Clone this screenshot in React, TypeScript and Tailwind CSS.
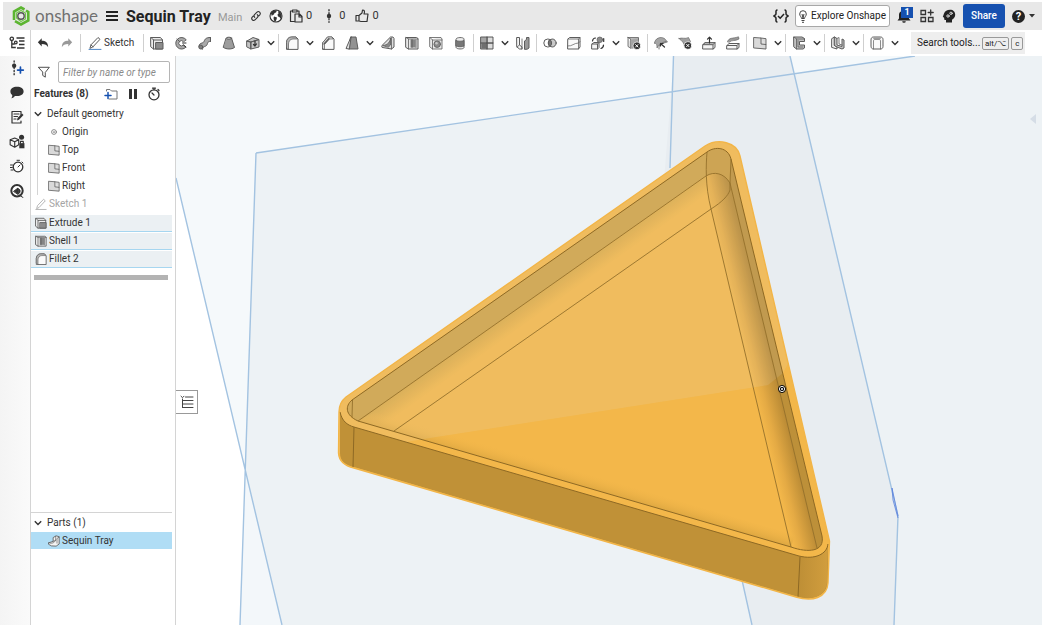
import React from "react";
import { clsx } from "clsx";

interface IconProps {
  children: React.ReactNode;
  className?: string;
}

function Icon({ children, className }: IconProps) {
  return (
    <svg
      viewBox="0 0 14 14"
      className={clsx("shrink-0", className || "w-3.5 h-3.5")}
      fill="none"
      stroke="#5c5c5c"
      strokeLinecap="round"
      strokeLinejoin="round"
      aria-hidden="true"
    >
      {children}
    </svg>
  );
}

const GREY = "#a9a9a9";
const PALE = "#dedede";

const icons: Record<string, React.ReactNode> = {
  undo: <path d="M1 6 5.500 1.500v2.800c4.500 0 7.500 2 7.500 7.700-1.500-2.900-3.500-3.700-7.500-3.700V11z" fill="#333" stroke="none" />,
  redo: <path d="M13 6 8.500 1.500v2.800C4 4.300 1 6.300 1 12c1.500-2.900 3.500-3.700 7.500-3.700V11z" fill="#999" stroke="none" />,
  sketch: (
    <>
      <path d="M2 12 3 8.800 10 1.500l2 1.800-7 7.500z" fill="#fff" />
      <path d="M3 9l2 1.700" />
      <path d="M1 13.400h12" stroke="#4d86c6" />
    </>
  ),
  extrude: (
    <>
      <path d="M1 1.500h9.500l2 2.500v9H3.500L1 11z" fill="#ececec" />
      <path d="M1 1.500 3.500 4h9M3.500 4v9" />
      <path d="M6 6.500h7V13H6z" fill="#8c8c8c" />
    </>
  ),
  revolve: (
    <>
      <path d="M12 3.500A5.800 5.800 0 1 0 12 11L9.300 9A2.600 2.600 0 1 1 9.300 5.500z" fill={GREY} />
      <path d="M8.500 7H12M9.500 9l2.500 2" stroke="#333" />
      <path d="M3 3l2.500 2.500" />
    </>
  ),
  sweep: (
    <>
      <path d="M1 10.500C1 6 5 8 6 5.500s2-4 6.500-4v4C9 5 10 8 8.500 9.500S5 10 4.500 13z" fill={GREY} />
      <ellipse cx="2.800" cy="11" rx="2" ry="2" fill="#808080" />
      <path d="M12.500 1.500v4" />
    </>
  ),
  loft: (
    <>
      <path d="M4.500 2h5l3 9.500c-3 2-8 2-11 0z" fill="#9c9c9c" />
      <ellipse cx="7" cy="2.200" rx="2.600" ry="1" fill={PALE} />
    </>
  ),
  thicken: (
    <>
      <path d="M1 5 5 6v7l-4-2zM5 6l8-2.500V11l-8 2zM1 5l6-3.500 6 2L5 6z" fill="#c4c4c4" />
      <path d="M9 5v5M7.500 8.500 9 10l1.500-2" stroke="#333" strokeWidth="1.200" />
    </>
  ),
  fillet: (
    <>
      <path d="M1.500 13V6.500c0-3 2-5.500 5-5.500H11l2 2v10z" fill="#fafafa" />
      <path d="M1.500 11V6.500c0-3 2-5.500 5-5.500H11l1.500 2H8C5 3 3.500 5.500 3.500 8v5z" fill="#b5b5b5" strokeWidth=".7" />
    </>
  ),
  chamfer: (
    <>
      <path d="M1.500 13V7l5-6H11l2 2v10z" fill="#fafafa" />
      <path d="M1.500 12V7l5-6H11l1 2H8.500L3.500 8.500V13z" fill={PALE} strokeWidth=".7" />
      <path d="M3 8l5-5.500" strokeWidth="1.300" />
    </>
  ),
  draft: (
    <>
      <path d="M6 1h5l2 12H4z" fill="#929292" />
      <path d="M6 1 1 12.500 4 13z" fill={PALE} />
    </>
  ),
  rib: (
    <>
      <path d="M1 9.500 9.500 1H12l1 1.500V11l-2.500 2-9-1.500z" fill={PALE} />
      <path d="M2 9.500C7 9 9 6 9.500 2v7l-2 2z" fill="#888" strokeWidth=".8" />
      <path d="M10.500 2v11" strokeWidth=".8" />
    </>
  ),
  shell: (
    <>
      <path d="M1 1.500h10.500l1.500 1V13H3.500L1 11.500z" fill="#e8e8e8" />
      <path d="M3.500 3v10M1 1.500 3.500 3H13M11 4v7.500" strokeWidth=".8" />
      <path d="M5.500 3.500h5.200v8H5.500z" fill="#858585" stroke="none" />
      <path d="M7 3.500v8" stroke="#555" strokeWidth=".8" />
    </>
  ),
  hole: (
    <>
      <path d="M1 1.500h11l1 1.500v10H3.500L1 11zM1 1.500 3.500 4H13M3.500 4v9" fill="#e9e9e9" strokeWidth=".8" />
      <circle cx="8.200" cy="8.200" r="3.300" fill="#8b8b8b" strokeWidth=".8" />
      <circle cx="7.500" cy="7.300" r="1.200" fill="#c8c8c8" stroke="none" />
    </>
  ),
  thread: (
    <>
      <path d="M3 3c0-2 8-2 8 0v8.500c0 2-8 2-8 0z" fill="#ececec" strokeWidth=".9" />
      <path d="M3 4.500c2 1 6 1 8 0v5.500c-2 1-6 1-8 0z" fill="#777" strokeWidth=".8" />
    </>
  ),
  pattern: (
    <>
      <path d="M1 1h12v12H1z" fill="#a5a5a5" />
      <path d="M1.500 7.500h5v5h-5z" fill="#707070" stroke="none" />
      <path d="M8 1.800h4.300v4.400H8zM8 8h4.300v4.300H8z" fill="#dcdcdc" stroke="none" />
      <path d="M7 1v12M1 7h12" stroke="#444" />
    </>
  ),
  mirror: (
    <>
      <path d="M1 1.500h2.500V9L6 11v2H3.500L1 11z" fill="#f4f4f4" />
      <path d="M8.500 13V5l2-1.500v-2H13V12l-1.500 1z" fill="#999" />
      <path d="M3.500 9 1 11M6 3v10" strokeWidth=".8" />
    </>
  ),
  boolean: (
    <>
      <circle cx="4.800" cy="7" r="4" fill="#fff" />
      <circle cx="9.200" cy="7" r="4" fill="#c9c9c9" />
      <path d="M7 3.700a4 4 0 0 1 0 6.600 4 4 0 0 1 0-6.600z" fill="#777" />
    </>
  ),
  split: (
    <>
      <path d="M1 3 2.500 1.500H13V11l-1.500 2H1z" fill="#fafafa" />
      <path d="M1 3h10.500v10M11.500 3 13 1.500" strokeWidth=".8" />
      <path d="M1 10c4 .5 6-3 10.500-3L13 5.500" strokeWidth=".7" />
    </>
  ),
  transform: (
    <>
      <path d="M1 8l2-1.500h5V11.500L6.500 13H1zM1 8h5.500v5M6.500 8 8 6.500" fill="#f5f5f5" />
      <circle cx="8.800" cy="3.800" r="2.800" fill="#8c8c8c" strokeWidth=".7" />
      <path d="M1.500 5c.3-2 1.500-3 3-3M12.500 9c0 2-1 3-2.500 3.500M12.700 2.500v3" stroke="#333" strokeWidth="1.200" />
    </>
  ),
  deletePart: (
    <>
      <path d="M1 1.500h10.500V6M1 1.500v9L3.500 12H6M3.500 3v9M1 1.500 3.500 3h8" fill="#e0e0e0" strokeWidth=".8" />
      <path d="M3.500 3.500H11V12H3.500z" fill="#a5a5a5" stroke="none" />
      <circle cx="9.800" cy="9.800" r="3.800" fill="#333" stroke="#fff" strokeWidth=".7" />
      <path d="M8.600 8.600 11 11M11 8.600 8.600 11" stroke="#fff" />
    </>
  ),
  modifyFillet: (
    <>
      <path d="M.5 7C1 2.500 6 0 10.500 2.500l3 3.500-3.500 1-2 1-3 1-2 3C3 9 3 7.500.5 7z" fill="#a5a5a5" strokeWidth=".6" />
      <path d="M5 13c-.5-4 2-6.500 7-7.500" stroke="#777" />
      <path d="M6.500 7.500l4 3.500M6.500 10V7.500H9" stroke="#333" strokeWidth="1.200" />
    </>
  ),
  deleteFace: (
    <>
      <path d="M1 2.500c3-1.500 6 1 9.500-1l2 4L6.500 11C6.500 7 4 5 1 2.500z" fill="#a0a0a0" strokeWidth=".6" />
      <circle cx="9.800" cy="9.500" r="3.800" fill="#333" stroke="#fff" strokeWidth=".7" />
      <path d="M8.600 8.300l2.400 2.400M11 8.300 8.600 10.700" stroke="#fff" />
    </>
  ),
  moveFace: (
    <>
      <path d="M1 8.500l2-2h10v5L11 13H1zM1 8.500h10V13M11 8.500l2-2" fill="#f5f5f5" />
      <path d="M1.500 8.500 3.500 6.500H13l-2 2z" fill="#b5b5b5" strokeWidth=".7" />
      <path d="M7.500 7V1.500M5.500 3.200l2-2 2 2" stroke="#333" strokeWidth="1.200" />
    </>
  ),
  replaceFace: (
    <>
      <path d="M1 9.500l2-2h10v4L11 13H1zM1 9.500h10V13M11 9.500l2-2" fill="#f5f5f5" />
      <path d="M1.500 5.500C3.500 1 6 3 12.500.800L13 3C9 5.500 6 3.500 3.500 6z" fill="#9a9a9a" strokeWidth=".6" />
    </>
  ),
  plane: (
    <>
      <path d="M1 1.500 13 3v10.500L1 12z" fill="#e1e1e1" stroke="none" />
      <path d="M1 1.500 8 2v6l5 .500v4.500L1 12zM8 2l5 .700V8.500" fill="#d9d9d9" strokeWidth=".9" />
    </>
  ),
  frame: (
    <>
      <path d="M2 1h8l2.500 1.500v3H7.500v3.500h5v3L11 13H4.500L2 11z" fill="#c2c2c2" />
      <path d="M2 1l2.500 2h8M4.500 3v10M6 4.500v6.500h5" strokeWidth=".8" />
    </>
  ),
  sheetMetal: (
    <>
      <path d="M1 2.500 3.500 1v8.500L6 11v2L1 11.500z" fill="#f0f0f0" />
      <path d="M3.500 1 6 2.500V9l5 1.500V3l2 1v8l-2 1-5-2-2.500-1.500z" fill="#c2c2c2" />
      <path d="M6 2.500 8 1.500v6.500L11 9" strokeWidth=".8" />
    </>
  ),
  custom: (
    <>
      <path d="M1 3.500C1 2 2 1 3.500 1h7C12 1 13 2 13 3.500v7c0 1.500-1 2.500-2.500 2.500h-7C2 13 1 12 1 10.500z" fill="#fafafa" />
      <path d="M3.500 13V5c0-1 .5-1.500 1.500-1.500h4c1 0 1.500.5 1.500 1.500v8" strokeWidth=".7" />
      <path d="M2.500 1.500h9L10 3.500H4z" fill="#9b9b9b" stroke="none" />
    </>
  ),
  part: (
    <>
      <path d="M1 9l5-1.500V3l3.500-2L13 2v8.500L9.500 13 4 12.700 1 11z" fill="#f4f4f4" />
      <path d="M6 7.500 9 6V1.500M1 9c3 1.500 6.500.500 8-3M13 2.500 10.500 4v5.500" strokeWidth=".8" />
    </>
  ),
};

interface Tool {
  icon: string;
  label: string;
  menu?: boolean;
}

const toolGroups: Tool[][] = [
  [
    { icon: "extrude", label: "Extrude" },
    { icon: "revolve", label: "Revolve" },
    { icon: "sweep", label: "Sweep" },
    { icon: "loft", label: "Loft" },
    { icon: "thicken", label: "Thicken", menu: true },
  ],
  [
    { icon: "fillet", label: "Fillet", menu: true },
    { icon: "chamfer", label: "Chamfer" },
    { icon: "draft", label: "Draft", menu: true },
    { icon: "rib", label: "Rib" },
    { icon: "shell", label: "Shell" },
    { icon: "hole", label: "Hole" },
    { icon: "thread", label: "External thread" },
  ],
  [
    { icon: "pattern", label: "Linear pattern", menu: true },
    { icon: "mirror", label: "Mirror" },
  ],
  [
    { icon: "boolean", label: "Boolean" },
    { icon: "split", label: "Split" },
    { icon: "transform", label: "Transform", menu: true },
    { icon: "deletePart", label: "Delete part" },
  ],
  [
    { icon: "modifyFillet", label: "Modify fillet" },
    { icon: "deleteFace", label: "Delete face" },
    { icon: "moveFace", label: "Move face" },
    { icon: "replaceFace", label: "Replace face" },
  ],
  [{ icon: "plane", label: "Plane", menu: true }],
  [{ icon: "frame", label: "Frame", menu: true }],
  [{ icon: "sheetMetal", label: "Sheet metal", menu: true }],
  [{ icon: "custom", label: "Custom features", menu: true }],
];

function Chevron({ className }: { className?: string }) {
  return (
    <svg viewBox="0 0 8 8" className={clsx("w-2 h-2 shrink-0", className)} fill="none" stroke="#333" strokeWidth="1.400" aria-hidden="true">
      <path d="M.8 2.300 4 5.500l3.200-3.200" />
    </svg>
  );
}

function Separator() {
  return <span className="w-px h-[18px] mx-px bg-[#cfcfcf] shrink-0" />;
}

function ToolButton({ icon, label, menu }: Tool) {
  return (
    <>
      <button aria-label={label} className="w-6 h-6 flex items-center justify-center shrink-0">
        <Icon>{icons[icon]}</Icon>
      </button>
      {menu && (
        <button aria-label={`${label} menu`} className="w-3 h-6 flex items-center justify-center shrink-0">
          <Chevron />
        </button>
      )}
    </>
  );
}

function Header() {
  return (
    <header className="h-7 ml-[3px] mt-0.5 bg-[#e8e8e8] flex items-center shrink-0 text-[#333]">
      <a href="#" className="flex items-center gap-1 ml-2 w-[95px]">
        <svg viewBox="0 0 20 20" className="w-5 h-5 shrink-0" fill="none" aria-hidden="true">
          <path d="M3 14V5.500L10 1.500l3.500 2" stroke="#5cb531" strokeWidth="2.600" />
          <path d="M15 4.500 17.300 6v8.500L10 18.500l-6-3.400" stroke="#5cb531" strokeWidth="2.600" />
          <path d="M5.500 12V7L10 4.500 14.500 7v6L10 15.500z" stroke="#74c84b" strokeWidth="1.200" />
          <circle cx="10" cy="10" r="3.200" fill="#e8e8e8" stroke="#555" strokeWidth="1.400" />
        </svg>
        <span className="font-['Lato'] text-[17px] leading-5 text-[#707070]">onshape</span>
      </a>
      <button aria-label="Menu" className="w-3 flex flex-col gap-0.5">
        <span className="h-0.5 bg-[#222]" />
        <span className="h-0.5 bg-[#222]" />
        <span className="h-0.5 bg-[#222]" />
      </button>
      <h1 className="ml-2 w-[92px] whitespace-nowrap text-base leading-4 pt-0.5 font-bold text-[#222]">Sequin Tray</h1>
      <span className="w-8 text-[11px] leading-4 pt-1 text-[#999]">Main</span>
      <button aria-label="Copy link" className="w-3">
        <Icon className="w-3 h-3">
          <path d="M5.500 8.500c-1-1-1-2.300 0-3.300l2.700-2.700c2-2 5 1 3.200 3.100L10 7M8.500 5.500c1 1 1 2.300 0 3.300L5.800 11.500c-2 2-5-1-3.200-3.100L4 7" stroke="#333" strokeWidth="1.300" />
        </Icon>
      </button>
      <button aria-label="Public document" className="ml-[7px] w-3.5">
        <Icon>
          <circle cx="7" cy="7" r="6" fill="#fff" stroke="#333" strokeWidth="1.100" />
          <path d="M1.800 4 4.500 1.500 8 1.300 7 3.500 5.500 4 5 5.500l-1.500.5L3 7.500zM5 7.500l3 1-.5 2-1 2.200L5 11.500 4.500 9zM9 2l2.500 1.500L12.700 7l-1.200 3-1-2-1.500-.5-.5-2 1-1z" fill="#333" stroke="none" />
        </Icon>
      </button>
      <button className="ml-1.5 flex items-center gap-[3px] text-[11px] leading-4">
        <Icon>
          <path d="M5 12.500H1.500V2h2M8 2h2v2M3.500 1h4.500v2H3.500zM6 5h4.500L13 7.500V13H6zM10 5v3h3" stroke="#333" strokeWidth="1.200" />
        </Icon>
        0
      </button>
      <button className="ml-2.5 flex items-center gap-[3px] text-[11px] leading-4">
        <Icon>
          <path d="M7 .8v12.500" stroke="#333" strokeWidth="1.400" strokeDasharray="1 2" />
          <circle cx="7" cy="7" r="2.200" fill="#333" stroke="none" />
        </Icon>
        0
      </button>
      <button className="ml-2.5 flex items-center gap-[3px] text-[11px] leading-4">
        <Icon>
          <path d="M1 6.500h3V12H1zM4 6.500 7 4l.5-3c2 0 2.500 1.500 1.500 4h4L12 12.500H6L4 12" stroke="#333" strokeWidth="1.200" />
        </Icon>
        0
      </button>

      <div className="ml-auto flex items-center h-full">
        <button aria-label="Feature script" className="w-4 mr-1.5">
          <svg viewBox="0 0 16 14" className="w-4 h-3.5" fill="none" stroke="#222" strokeWidth="1.500" aria-hidden="true">
            <path d="M4.500 1C2 1 3.500 4 2.800 5.500L1 7l1.800 1.500C3.500 10 2 13 4.500 13M11.500 1c2.500 0 1 3 1.700 4.500L15 7l-1.800 1.500C12.500 10 14 13 11.500 13M5 7l2.200 2.200L11 5" />
          </svg>
        </button>
        <button className="h-[22px] w-[95px] rounded-[3px] border border-[#a8a8a8] bg-white flex items-center justify-center gap-1 text-[10px] leading-4 whitespace-nowrap text-[#222]">
          <svg viewBox="0 0 8 13" className="w-2 h-[13px] shrink-0" fill="none" stroke="#444" aria-hidden="true">
            <path d="M2.500 8.500C2.500 7 .7 6 .7 4a3.300 3.300 0 0 1 6.600 0c0 2-1.800 3-1.800 4.500zM2.500 10.500h3M3 12.300h2M3 4l1 4 1-4" />
          </svg>
          Explore Onshape
        </button>
        <button aria-label="Notifications" className="relative ml-[7px] w-3.5">
          <Icon>
            <path d="M.5 11.500 2 9.500V6C2 3 4.500 1.500 7 1.500S12 3 12 6v3.500l1.500 2zM5.200 12.200h3.600a1.800 1.500 0 0 1-3.600 0" fill="#222" stroke="none" />
          </Icon>
          <span className="absolute -top-0.5 left-1 w-3 h-[11px] bg-[#1651b0] text-white text-[9px] leading-[11px] font-bold text-center">1</span>
        </button>
        <button aria-label="Apps" className="ml-[9px] w-3.5">
          <Icon>
            <path d="M1 1.500h4.500v4H1zM1 8.500h4.500v4H1zM8.500 8.500H13v4H8.500zM10.700 1v5M8.200 3.500h5" stroke="#333" strokeWidth="1.300" strokeLinejoin="miter" />
          </Icon>
        </button>
        <button aria-label="Learning center" className="ml-2 w-3.5">
          <Icon>
            <path d="M4 13.500V11H2.500L2 8.500.8 8 2 4.500C3 2 5 .8 8 .8c3.200 0 5.200 2 5.200 5 0 2.200-1.200 3.500-3.200 5v2.700z" fill="#222" stroke="none" />
            <circle cx="6" cy="7" r="1.200" stroke="#e8e8e8" strokeWidth=".9" />
            <circle cx="9" cy="4.300" r="1.200" stroke="#e8e8e8" strokeWidth=".9" />
          </Icon>
        </button>
        <button className="ml-[7px] h-6 w-[42px] rounded-[3px] bg-[#1651b0] text-white text-[10px] leading-4 font-medium">Share</button>
        <button aria-label="Help" className="ml-[7px] mr-[7px] flex items-center gap-1">
          <span className="w-[13px] h-[13px] rounded-full bg-[#222] text-white text-[11px] leading-[13px] font-bold">?</span>
          <svg viewBox="0 0 6 4" className="w-1.5 h-1" aria-hidden="true">
            <path d="M0 0h6L3 3.500z" fill="#333" />
          </svg>
        </button>
      </div>
    </header>
  );
}

function Toolbar() {
  return (
    <div role="toolbar" className="h-[26px] pl-[3px] flex items-center bg-white shrink-0">
      <button aria-label="Feature list" className="w-7 h-full border-r border-[#d4d4d4] flex items-center justify-center shrink-0">
        <svg viewBox="0 0 16 14" className="w-4 h-3.5" fill="none" stroke="#333" strokeWidth="1.300" aria-hidden="true">
          <circle cx="2.800" cy="2.800" r="1.700" />
          <circle cx="6.800" cy="6.500" r="1.300" />
          <path d="M2.800 4.500v7h4M2.800 8h3M7.500 2h8M10 5h5.500M10 8.500h5.500M8 12h7.500" />
        </svg>
      </button>
      <button aria-label="Undo" className="w-6 h-6 flex items-center justify-center shrink-0">
        <Icon className="w-3 h-3">{icons.undo}</Icon>
      </button>
      <button aria-label="Redo" className="w-6 h-6 flex items-center justify-center shrink-0">
        <Icon className="w-3 h-3">{icons.redo}</Icon>
      </button>
      <Separator />
      <button className="w-[60px] h-6 pl-1.5 flex items-center gap-0.5 text-[10px] leading-4 text-[#333] shrink-0">
        <Icon>{icons.sketch}</Icon>
        Sketch
      </button>
      {toolGroups.map((group) => (
        <React.Fragment key={group[0].icon}>
          <Separator />
          {group.map((tool) => (
            <ToolButton key={tool.icon} {...tool} />
          ))}
        </React.Fragment>
      ))}
      <button className="ml-2.5 h-[22px] w-[114px] bg-[#eeeeee] flex items-center px-1.5 gap-0.5 text-[10px] leading-4 whitespace-nowrap text-[#222] shrink-0">
        <span className="w-[63px] text-left">Search tools...</span>
        <kbd className="h-[13px] px-0.5 border border-[#999] rounded-xs font-[inherit] text-[8px] leading-[11px]">alt/⌥</kbd>
        <kbd className="h-[13px] px-[3px] border border-[#999] rounded-xs font-[inherit] text-[8px] leading-[11px]">c</kbd>
      </button>
    </div>
  );
}

function Rail() {
  return (
    <nav className="w-[30px] pl-[3px] shrink-0 bg-linear-to-r from-[#f4f4f4] to-[#fafafa]">
      <div className="h-[147px] flex flex-col justify-between">
        <button aria-label="Versions" className="h-6 flex items-center justify-center">
          <Icon className="w-4 h-4">
            <path d="M4.500.8v12" stroke="#333" strokeWidth="1.200" strokeDasharray="1 1.800" />
            <circle cx="4.500" cy="5" r="1.900" fill="#333" stroke="none" />
            <path d="M7.500 8.800h5M10 6.300v5" stroke="#1651b0" strokeWidth="1.500" />
          </Icon>
        </button>
        <button aria-label="Comments" className="h-6 flex items-center justify-center">
          <Icon>
            <path d="M7 .8c4 0 6.600 2 6.600 4.700S11 10.100 7 10.100c-.8 0-1.500 0-2.200-.2C4 11.300 3 12 1.200 12.300c1-1 1.200-2 1-3.200C1 8.100.4 7 .4 5.500.4 2.800 3 .8 7 .8z" fill="#333" stroke="none" />
          </Icon>
        </button>
        <button aria-label="Notes" className="h-6 flex items-center justify-center">
          <Icon>
            <path d="M11 5V1.500H2v11.500h9v-2M4 4h5M4 6.500h3.500M4 9h2" stroke="#333" strokeWidth="1.200" />
            <path d="M7 10.500 7.500 8 12 3.500l1.500 1.500L9 9.800z" fill="#333" stroke="none" />
          </Icon>
        </button>
        <button aria-label="Part references" className="h-6 flex items-center justify-center">
          <Icon className="w-4 h-4">
            <path d="M1 5l4-1.500L8.500 5v4.500L5 11.500 1 9.500zM1 5l4 1.800L8.500 5M5 6.800v4.500" stroke="#333" />
            <circle cx="11" cy="2.800" r="2.200" fill="#333" stroke="none" />
            <path d="M9 8h4.500v4.500H9z" fill="#333" stroke="none" />
            <path d="M10 8V6.500h2.500V8" stroke="#333" />
          </Icon>
        </button>
        <button aria-label="Performance" className="h-6 flex items-center justify-center">
          <Icon>
            <circle cx="8" cy="8" r="4.800" fill="#fff" stroke="#333" strokeWidth="1.300" />
            <path d="M7 1.300h2.500M12 3l1 1M8 8l2-2M.5 6h2M.3 8.500h2M1 11h2" stroke="#333" />
          </Icon>
        </button>
        <button aria-label="Search" className="h-6 flex items-center justify-center">
          <Icon>
            <circle cx="7" cy="6.800" r="5.700" fill="#fff" stroke="#333" strokeWidth="2" />
            <path d="M3.800 7.200 8 4v6zM8.500 5l1.500 1v2.500L8.500 9.500zM9 11l4 2.500" fill="#333" stroke="#333" />
          </Icon>
        </button>
      </div>
    </nav>
  );
}

function FeatureRow({ icon, label }: { icon: string; label: string }) {
  return (
    <li className="h-[17px] mr-[3px] pl-1 flex items-center gap-0.5 bg-[#ebf0f3] border-b border-[#a6d6f0]">
      <Icon className="w-3 h-3">{icons[icon]}</Icon>
      {label}
    </li>
  );
}

function FeaturePanel() {
  return (
    <aside className="w-[146px] shrink-0 border-x border-[#d4d4d4] bg-white flex flex-col text-[10px] leading-4 text-[#333]">
      <div className="pt-[5px] pl-[7px] pr-[5px] flex items-center gap-2">
        <Icon className="w-3 h-3">
          <path d="M.8 1.500h12.400L8.500 7.500v5.500L5.500 11V7.500z" stroke="#444" strokeWidth="1.100" />
        </Icon>
        <input
          aria-label="Filter features"
          placeholder="Filter by name or type"
          className="w-full min-w-0 h-[22px] px-1 rounded-xs border border-[#b5b5b5] text-[10px] italic placeholder:text-[#8a8a8a]"
        />
      </div>
      <div className="h-[21px] pl-[3px] flex items-center">
        <h2 className="w-[70px] font-bold">Features (8)</h2>
        <button aria-label="Add folder" className="w-3.5">
          <Icon>
            <path d="M2.500 4V2.500h3.500L7.500 4H13v8H5" stroke="#777" />
            <path d="M1 8.500h6M4 5.500v6" stroke="#1651b0" strokeWidth="1.500" />
          </Icon>
        </button>
        <button aria-label="Pause" className="ml-2 w-3.5 flex justify-center gap-0.5">
          <span className="w-[3px] h-2.5 bg-[#333]" />
          <span className="w-[3px] h-2.5 bg-[#333]" />
        </button>
        <button aria-label="Regeneration times" className="ml-[7px] w-3.5">
          <Icon>
            <circle cx="7" cy="7.800" r="5" stroke="#333" strokeWidth="1.300" />
            <path d="M5.500 1.200h3M7 1.200v1.500M7 8 5 6M11 2.500l1 1" stroke="#333" strokeWidth="1.200" />
          </Icon>
        </button>
      </div>

      <button className="mt-px h-[18px] pl-[3px] flex items-center gap-[5px] text-left">
        <Chevron />
        Default geometry
      </button>
      <ul className="ml-1.5 border-l border-[#d4d4d4]">
        <li className="h-[18px] pl-2.5 flex items-center gap-0.5">
          <Icon className="w-3 h-3">
            <circle cx="7" cy="7" r="2.800" stroke="#777" />
            <circle cx="7" cy="7" r="1" fill="#777" stroke="none" />
          </Icon>
          Origin
        </li>
        {["Top", "Front", "Right"].map((name) => (
          <li key={name} className="h-[18px] pl-2.5 flex items-center gap-0.5">
            <Icon className="w-3 h-3">{icons.plane}</Icon>
            {name}
          </li>
        ))}
      </ul>
      <div className="h-[18px] pl-1 flex items-center gap-0.5 text-[#a5a5a5]">
        <Icon className="w-3 h-3 opacity-50">
          <path d="M2 12 3 8.800 10 1.500l2 1.800-7 7.500zM1 13.400h12" />
        </Icon>
        Sketch 1
      </div>
      <ul className="mt-0.5 flex flex-col gap-px">
        <FeatureRow icon="extrude" label="Extrude 1" />
        <FeatureRow icon="shell" label="Shell 1" />
        <FeatureRow icon="fillet" label="Fillet 2" />
      </ul>
      <div className="mt-[7px] ml-[3px] mr-[7px] h-[5px] bg-[#b3b3b3]" />

      <section className="mt-auto mb-[76px] mr-[3px] border-t border-[#d4d4d4]">
        <button className="h-[19px] pl-[3px] flex items-center gap-[5px]">
          <Chevron />
          Parts (1)
        </button>
        <div className="h-[17px] pl-[17px] flex items-center gap-0.5 bg-[#b0ddf5]">
          <Icon className="w-3 h-3">{icons.part}</Icon>
          Sequin Tray
        </div>
      </section>
    </aside>
  );
}

const OUTLINE =
  "M705 146 346 397C341 401 339 406 339 412L338.500 453C339 461 345 466 354 468L796 597C812 602 827 598 828 583L829.500 541 740 156C737 142 718 138 705 146Z";
const INNER =
  "M707 152 352 400C345 406 345 415 358 421L791 547C808 553 825 552 822 536L731 159C728 147 715 146 707 152Z";

function TrayModel() {
  return (
    <svg viewBox="176 56 866 569" preserveAspectRatio="xMidYMid slice" className="w-full h-full" fill="none" role="img" aria-label="Sequin Tray model">
      <defs>
        <linearGradient id="leftFillet" gradientUnits="userSpaceOnUse" x1="500" y1="321" x2="510" y2="335">
          <stop offset="0" stopColor="#dba946" />
          <stop offset="1" stopColor="#f3b74a" />
        </linearGradient>
        <linearGradient id="rightFillet" gradientUnits="userSpaceOnUse" x1="750" y1="375" x2="774" y2="369">
          <stop offset="0" stopColor="#f3b74a" />
          <stop offset=".35" stopColor="#e4aa44" />
          <stop offset="1" stopColor="#b98a35" />
        </linearGradient>
        <linearGradient id="frontFillet" gradientUnits="userSpaceOnUse" x1="575" y1="484" x2="579" y2="470">
          <stop offset="0" stopColor="#e0a942" />
          <stop offset="1" stopColor="#f3b74a" stopOpacity="0" />
        </linearGradient>
        <linearGradient id="corner" gradientUnits="userSpaceOnUse" x1="799" y1="0" x2="829" y2="0">
          <stop offset="0" stopColor="#be8f36" />
          <stop offset="1" stopColor="#d29e3e" />
        </linearGradient>
        <clipPath id="innerClip">
          <path d={INNER} />
        </clipPath>
        <clipPath id="outerClip">
          <path d={OUTLINE} />
        </clipPath>
      </defs>

      {/* Reference planes */}
      <path d="M176 56H1042V625H282L176 178Z" fill="#f5f9fb" />
      <path d="M256 153 915 56H1042V625H240Z" fill="#f3f7fa" />
      <path d="M256 153 915 56H1042V625H282L245 469Z" fill="#edf2f5" />
      <path d="M674 56H790L898 516 894 625H752L660 230Z" fill="#e8edf1" />
      <path d="M256 153 915 56M256 153 240 625M176 178 282 625M673.500 56 670 168M790 56 898 516 894 625M742 580 752 625" stroke="#a3c3e1" strokeWidth="1.400" />
      <path d="M892 488 893 500 898 518M892 488 898 516" stroke="#5b82dd" strokeWidth=".8" />
      <path d="M1036 114v10l-6-5z" fill="#d5dde6" />

      {/* Tray cavity */}
      <path d={OUTLINE} fill="#f3b74a" />
      <g clipPath="url(#innerClip)">
        <path d="M340 434 358 421 707 176 711 209 394 431 380 440Z" fill="url(#leftFillet)" />
        <path d="M707 140 706 176 358 421 340 434V140Z" fill="#d0a246" />
        <path d="M707 140 706 176 711 209 791 550H822L730 183Z" fill="url(#rightFillet)" />
        <path d="M707 140H735L731 160 730 183C724 173 714 171 706 176Z" fill="#cb9b3f" />
        <path d="M731 159 730 183 817 549 840 540Z" fill="#bd9039" />
        <path d="M358 421 791 547 795 535 375 412Z" fill="url(#frontFillet)" />
      </g>
      <path d="M335 454 430 438 768 385 783 373 790 360V130H335Z" fill="#dfe8ee" opacity=".12" clipPath="url(#outerClip)" />

      {/* Outer walls */}
      <path d="M340 412C342 421 347 425 354 427L799 556C815 560 827 554 828 544V582C827 596 812 601 798 597L354 467C345 465 340 461 340 453Z" fill="#c09137" />
      <path d="M799.500 556C815 560 827 554 828 544L827 582C826 596 812 601 798 597Z" fill="url(#corner)" />
      <path d="M340 412C342 421 347 425 354 427L799 556C815 560 827 554 828 544M354 427 353 467M800 557 798 597" stroke="#8e6924" />
      <path d={OUTLINE} stroke="#f2b548" strokeWidth="1.400" />

      <path
        d="M358 421 706 176C714 171 724 173 730 183V190C728 196 722 202 711 209L394 431M707 152C706 165 705 185 711 209L791 547M731 159 730 183 817 548M352.500 400 352 417"
        stroke="#94702b"
        strokeWidth=".9"
      />
      <path d={INNER} stroke="#8e6924" />
      <circle cx="782" cy="389" r="2.700" fill="#111" stroke="#fff" strokeWidth="1" />
      <circle cx="782" cy="389" r="3.600" stroke="#111" />
      <circle cx="782" cy="389" r="1" fill="#fff" />
    </svg>
  );
}

export default function App() {
  return (
    <div className="h-screen flex flex-col overflow-hidden bg-white font-['Roboto',sans-serif]">
      <Header />
      <Toolbar />
      <div className="flex-1 min-h-0 flex">
        <Rail />
        <FeaturePanel />
        <main className="relative flex-1 min-w-0">
          <TrayModel />
          <button aria-label="Show list" className="absolute left-0 top-[334px] w-[22px] h-6 bg-white border border-l-0 border-[#999] flex items-center justify-center">
            <Icon>
              <path d="M1 1.200 2.500 2.700 4 1.200M5.500 2H13M2.500 4v8.500M2.500 5.500H13M2.500 9H13M2.500 12.500H13" stroke="#444" />
            </Icon>
          </button>
        </main>
      </div>
    </div>
  );
}
